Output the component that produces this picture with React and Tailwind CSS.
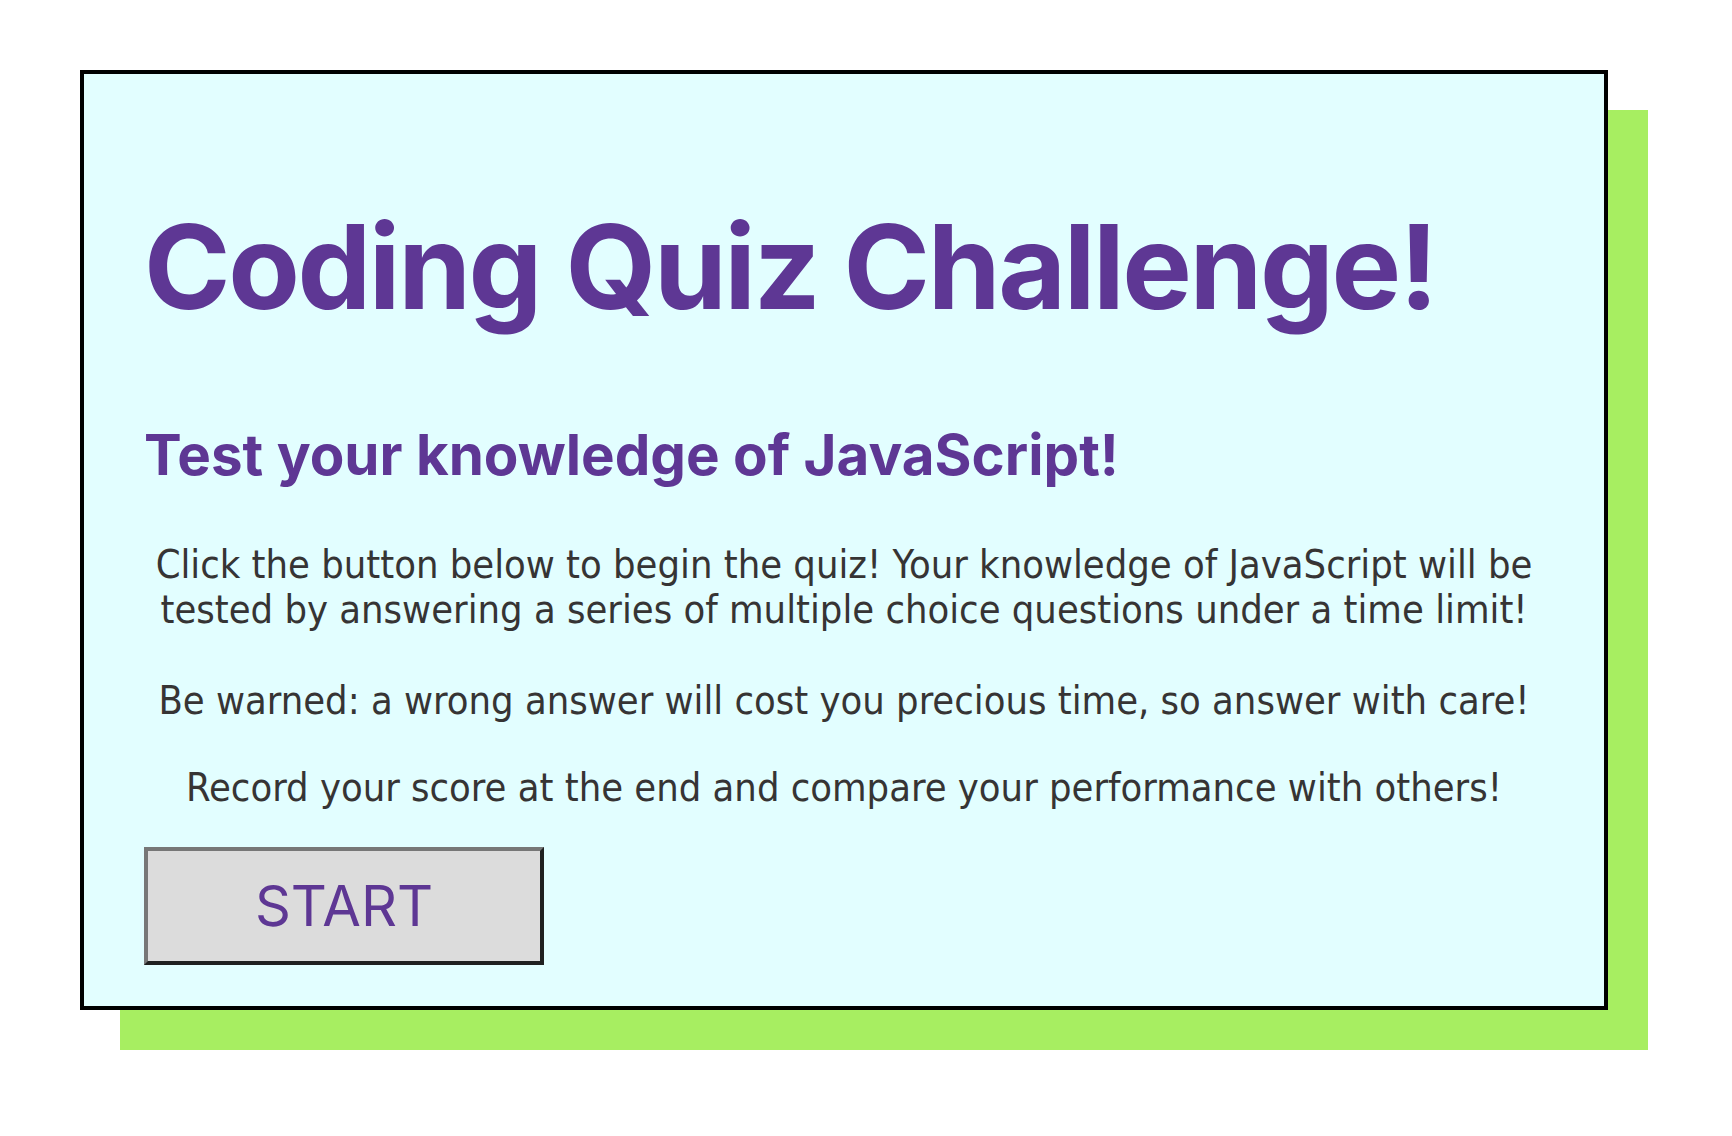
export default function App() {
  return (
    <div className="min-h-[1136px] w-full bg-white pt-[70px] pl-[80px]">
      <div className="w-[1528px] h-[940px] border-4 border-black bg-[#e2feff] shadow-[40px_40px_0_0_#a7ee61] px-[60px] flex flex-col">
        <h1 className="mt-[134px] text-[117px] leading-none font-bold text-[#5e3794] tracking-[-2.4px] font-[Inter,sans-serif]">
          Coding Quiz Challenge!
        </h1>
        <h2 className="mt-[102px] text-[56.5px] leading-none font-bold text-[#5e3794] font-[Inter,sans-serif]">
          Test your knowledge of JavaScript!
        </h2>
        <div className="mt-[58px] text-center text-[#363434] text-[39.5px] leading-[45px] flex flex-col font-['DejaVu_Sans_Condensed','DejaVu_Sans',sans-serif]">
          <p>
            Click the button below to begin the quiz! Your knowledge of JavaScript will be
            <br />
            tested by answering a series of multiple choice questions under a time limit!
          </p>
          <p className="mt-[46px]">Be warned: a wrong answer will cost you precious time, so answer with care!</p>
          <p className="mt-[42px]">Record your score at the end and compare your performance with others!</p>
        </div>
        <div className="mt-[37px]">
          <button className="w-[400px] h-[118px] border-4 border-t-[#777777] border-l-[#777777] border-r-[#1f2020] border-b-[#1f2020] bg-[#dcdcdc] text-[#5e3794] text-[56px] leading-none font-[Inter,sans-serif]">
            START
          </button>
        </div>
      </div>
    </div>
  );
}
